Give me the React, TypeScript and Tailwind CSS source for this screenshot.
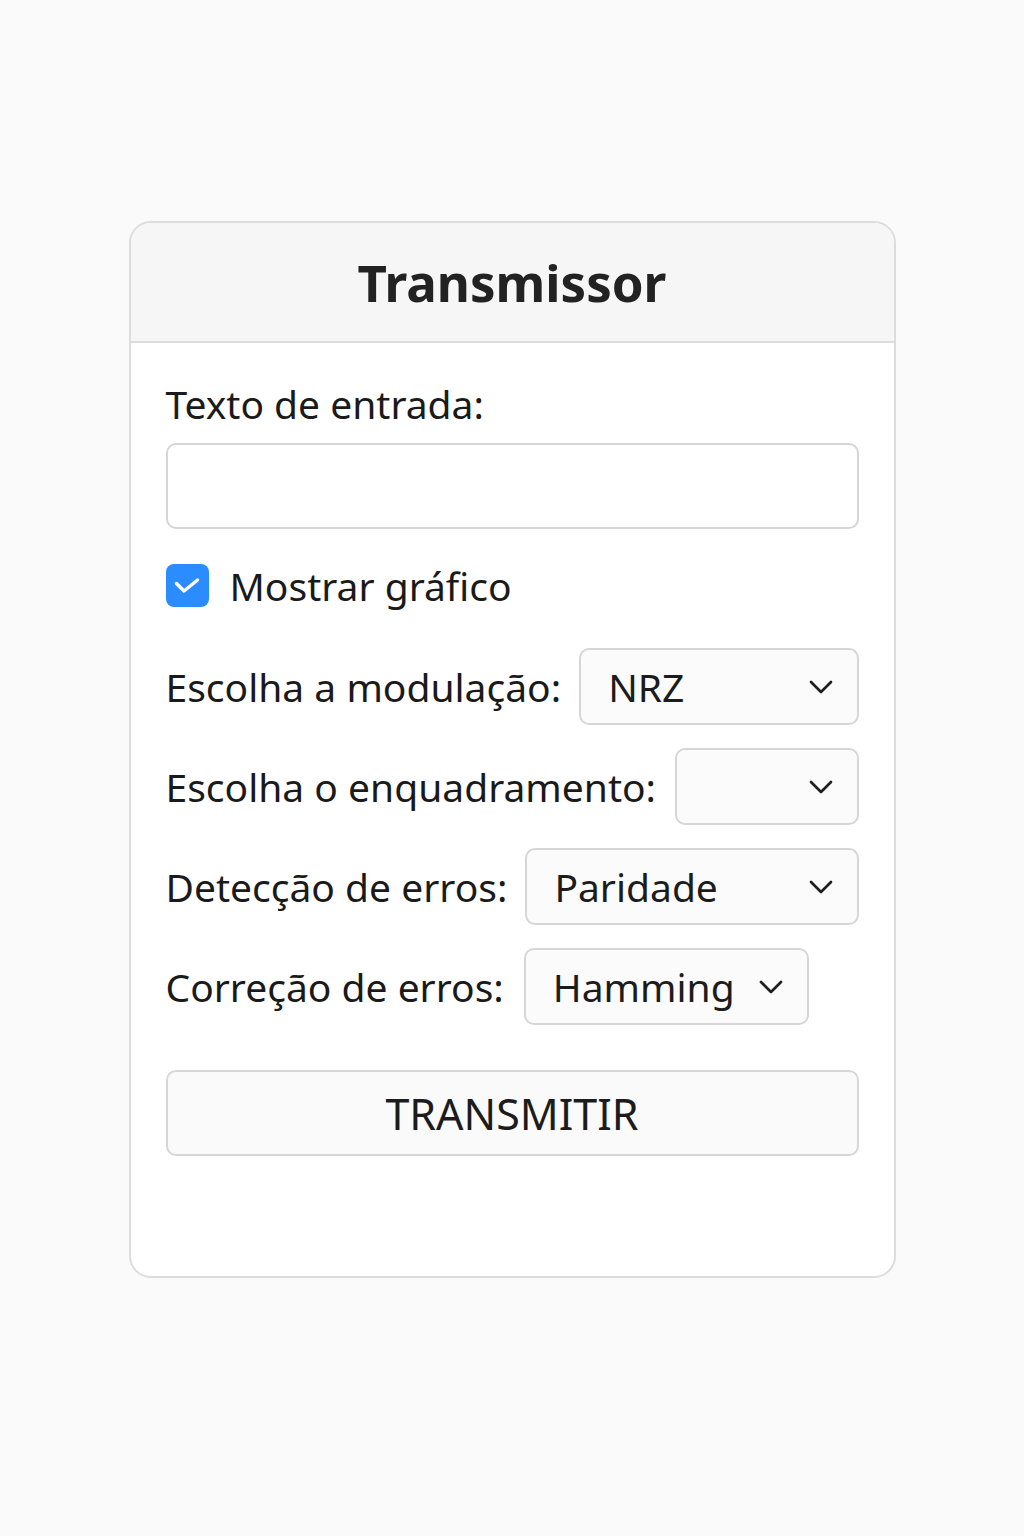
import React, { useState } from 'react';

const font = { fontFamily: '"Noto Sans", "Open Sans", Arial, sans-serif' };

function Chevron() {
    return (
        <svg width="24" height="14" viewBox="0 0 24 14" fill="none" className="shrink-0">
            <path d="M2 2 L12 12 L22 2" stroke="#1f1f1f" strokeWidth="2.7" strokeLinecap="round" strokeLinejoin="round" />
        </svg>
    );
}

function SelectBox({ value, className = '' }: { value: string; className?: string }) {
    return (
        <div
            className={`h-[77px] flex items-center justify-between pl-[27px] pr-[24px] rounded-[10px] border-2 border-[#d6d6d6] bg-[#fbfbfb] ${className}`}
        >
            <span className="text-[39px] text-[#1c1c1c] leading-none">{value}</span>
            <Chevron />
        </div>
    );
}

export default function App() {
    const [checked, setChecked] = useState(true);

    return (
        <div className="min-h-[1536px] w-full bg-[#fafafa] pt-[221px]" style={font}>
            <div className="mx-auto w-[767px] rounded-[22px] border-2 border-[#dcdcdc] bg-white overflow-hidden">
                <div className="h-[120px] bg-[#f6f6f6] border-b-2 border-[#dcdcdc] flex items-center justify-center">
                    <h1 className="text-[51px] font-bold text-[#222222] leading-none">Transmissor</h1>
                </div>

                <div className="px-[35px] pt-[38px] pb-[120px] flex flex-col">
                    <label className="text-[39px] leading-[46px] text-[#1a1a1a]">Texto de entrada:</label>
                    <input
                        type="text"
                        className="mt-[16px] h-[86px] w-full rounded-[10px] border-2 border-[#d6d6d6] bg-white outline-none px-4 text-[36px]"
                    />

                    <div className="mt-[35px] flex items-center gap-[21px]">
                        <button
                            type="button"
                            onClick={() => setChecked(!checked)}
                            className={`w-[43px] h-[43px] rounded-[8px] flex items-center justify-center ${
                                checked ? 'bg-[#2b8cff]' : 'bg-white border-2 border-[#ccc]'
                            }`}
                        >
                            {checked && (
                                <svg width="26" height="16" viewBox="0 0 26 16" fill="none">
                                    <path d="M2.5 5.5 L10 13 L23.5 2" stroke="white" strokeWidth="3.4" strokeLinecap="round" strokeLinejoin="round" />
                                </svg>
                            )}
                        </button>
                        <span className="text-[39px] leading-none text-[#1a1a1a]">Mostrar gráfico</span>
                    </div>

                    <div className="mt-[41px] flex flex-col gap-[23px]">
                        <div className="flex items-center gap-[18px] h-[77px]">
                            <span className="text-[39px] leading-none text-[#1a1a1a] whitespace-nowrap">Escolha a modulação:</span>
                            <SelectBox value="NRZ" className="flex-1" />
                        </div>
                        <div className="flex items-center gap-[19px] h-[77px]">
                            <span className="text-[39px] leading-none text-[#1a1a1a] whitespace-nowrap">Escolha o enquadramento:</span>
                            <SelectBox value="" className="flex-1" />
                        </div>
                        <div className="flex items-center gap-[18px] h-[77px]">
                            <span className="text-[39px] leading-none text-[#1a1a1a] whitespace-nowrap">Detecção de erros:</span>
                            <SelectBox value="Paridade" className="flex-1" />
                        </div>
                        <div className="flex items-center gap-[20px] h-[77px]">
                            <span className="text-[39px] leading-none text-[#1a1a1a] whitespace-nowrap">Correção de erros:</span>
                            <SelectBox value="Hamming" className="w-[285px]" />
                        </div>
                    </div>

                    <button
                        type="button"
                        className="mt-[45px] h-[86px] w-full rounded-[10px] border-2 border-[#d6d6d6] bg-[#fafafa] text-[43px] text-[#1c1c1c] leading-none"
                    >
                        TRANSMITIR
                    </button>
                </div>
            </div>
        </div>
    );
}
